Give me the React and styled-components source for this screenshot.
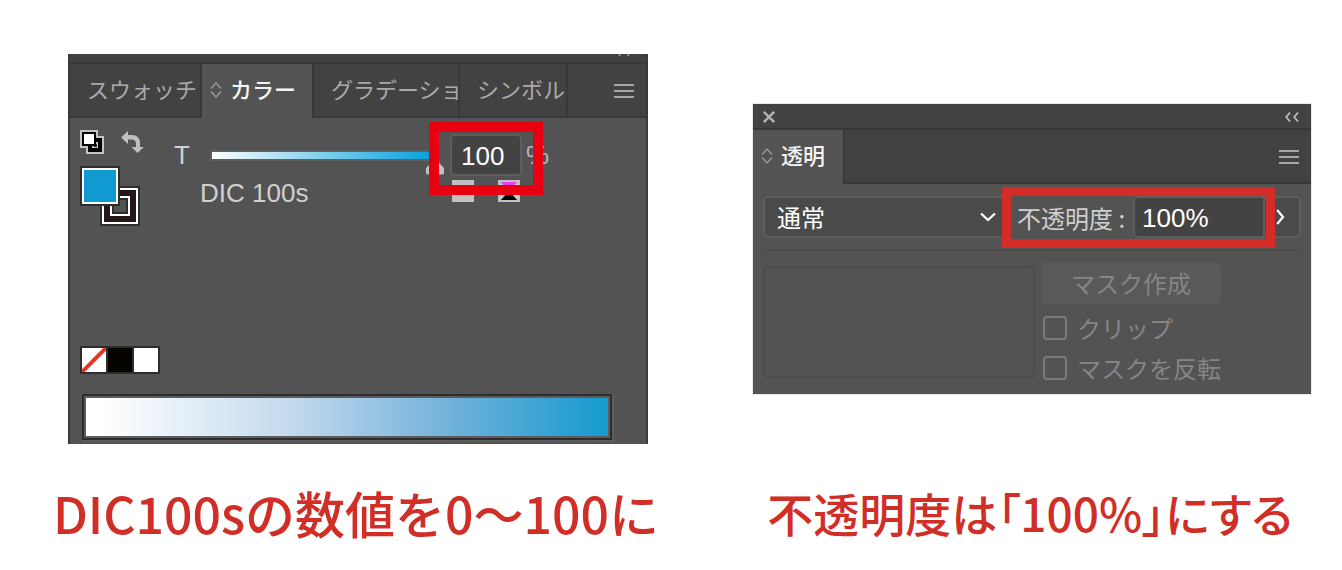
import React, { useState } from 'react';
import styled, { createGlobalStyle } from 'styled-components';

const SortIcon = () => (
  <svg width="12" height="18" viewBox="0 0 12 18" fill="none" stroke="#9a9a9a" strokeWidth="1.3">
    <path d="M1 7.5 6 2l5 5.500M1 10.500 6 16l5-5.500" />
  </svg>
);

const MenuIcon = () => (
  <svg width="20" height="14" viewBox="0 0 20 14" fill="#a8a8a8">
    <path d="M0 0h20v2H0zM0 6h20v2H0zM0 12h20v2H0z" />
  </svg>
);

const CloseIcon = () => (
  <svg width="12" height="12" viewBox="0 0 12 12" fill="none" stroke="#b4b4b4" strokeWidth="2.400">
    <path d="M.8.8l10.400 10.400M11.200.8.8 11.200" />
  </svg>
);

const CollapseIcon = () => (
  <svg width="14" height="10" viewBox="0 0 14 10" fill="none" stroke="#c4c4c4" strokeWidth="1.600">
    <path d="M5 .6 1.200 5 5 9.400M13 .6 9.200 5l3.800 4.400" />
  </svg>
);

const CollapseTipIcon = () => (
  <svg width="12" height="2" viewBox="0 0 12 2" fill="none" stroke="#a0a0a0" strokeWidth="1.400">
    <path d="M2.500 0 1 2M11 0 9.500 2" />
  </svg>
);

const ChevronDownIcon = () => (
  <svg width="16" height="10" viewBox="0 0 16 10" fill="none" stroke="#fff" strokeWidth="2.200">
    <path d="M1 1.500 8 8l7-6.500" />
  </svg>
);

const ChevronRightIcon = () => (
  <svg width="9" height="16" viewBox="0 0 9 16" fill="none" stroke="#fff" strokeWidth="2.200">
    <path d="M1.200 1 7 8l-5.800 7" />
  </svg>
);

const DefaultColorsIcon = () => (
  <svg width="24" height="24" viewBox="0 0 24 24">
    <path d="M0 0h18v6h6v18H6v-6H0z" fill="#c3c3c3" />
    <path d="M8 8h14v14H8z" fill="#000" />
    <path d="M12 12h6v6h-6z" fill="#c3c3c3" />
    <path d="M14 14h3v3h-3z" fill="#333" />
    <path d="M2 2h14v14H2z" fill="#000" />
    <path d="M4 4h10v10H4z" fill="#fff" />
  </svg>
);

const SwapIcon = () => (
  <svg width="24" height="22" viewBox="0 0 24 22" fill="#bfbfbf">
    <path d="M0 6.500 7 0v4h3.500c5.500 0 8.500 3 8.500 8v4h4l-6.500 6-6-6h4.500v-3c0-3-1.500-4.500-4.500-4.500H7V13z" />
  </svg>
);

const FillStrokeIcon = () => (
  <svg width="60" height="60" viewBox="0 0 60 60">
    <path d="M20 20h40v40H20z" fill="#2d2d2d" />
    <path d="M22 22h36v36H22z" fill="#fff" />
    <path d="M24 24h32v32H24z" fill="#231815" />
    <path d="M30 30h20v20H30z" fill="#fff" />
    <path d="M32 32h16v16H32z" fill="#2d2d2d" />
    <path d="M34 34h12v12H34z" fill="#535353" />
    <path d="M0 0h40v40H0z" fill="#2d2d2d" />
    <path d="M2 2h36v36H2z" fill="#fff" />
    <path d="M4 4h32v32H4z" fill="#1199d2" />
  </svg>
);

const ProcessIcon = () => (
  <svg width="22" height="22" viewBox="0 0 22 22">
    <path d="M0 0h22v22H0z" fill="#c1c1c1" />
    <path d="M3 2h16l-8 9z" fill="#e83df0" />
    <path d="M3 20h16l-8-9z" fill="#000" />
    <path d="M2 3l8 8-8 8z" fill="#9fdbe0" />
    <path d="M20 3l-8 8 8 8z" fill="#eadb8a" />
  </svg>
);

const App = () => {
  const [tint, setTint] = useState('100');
  const [opacity, setOpacity] = useState('100%');

  return (
    <>
      <GlobalStyle />
      <Page>
        <ColorPanel>
          <TopStrip>
            <CollapseTipIcon />
          </TopStrip>
          <TabBar>
            <Tab $width={130}>スウォッチ</Tab>
            <Tab $width={110} $active>
              <SortIcon />
              カラー
            </Tab>
            <Tab $width={144}>グラデーショ</Tab>
            <Tab $width={106}>シンボル</Tab>
            <TabRest>
              <IconButton aria-label="パネルメニュー">
                <MenuIcon />
              </IconButton>
            </TabRest>
          </TabBar>
          <ColorBody>
            <ColorTop>
              <ChipColumn>
                <ChipTools>
                  <IconButton aria-label="初期設定の塗りと線">
                    <DefaultColorsIcon />
                  </IconButton>
                  <IconButton aria-label="塗りと線を入れ替え">
                    <SwapIcon />
                  </IconButton>
                </ChipTools>
                <FillStrokeIcon />
              </ChipColumn>
              <ColorMain>
                <TintRow>
                  <TintLabel htmlFor="tint">T</TintLabel>
                  <TintSlider
                    type="range"
                    min="0"
                    max="100"
                    aria-label="T"
                    value={Number(tint) || 0}
                    onChange={(e) => setTint(e.target.value)}
                  />
                  <TintField>
                    <NumberInput id="tint" value={tint} onChange={(e) => setTint(e.target.value)} />
                    <TintHighlight />
                  </TintField>
                  <Unit>%</Unit>
                </TintRow>
                <NameRow>
                  <ColorName>DIC 100s</ColorName>
                  <ModeIcons>
                    <SpotSquare />
                    <ProcessIcon />
                  </ModeIcons>
                </NameRow>
              </ColorMain>
            </ColorTop>
            <QuickColors>
              <QuickColor $color="#fff" aria-label="なし">
                <svg width="24" height="24" viewBox="0 0 24 24">
                  <path d="M0 24 24 0" stroke="#ee3124" strokeWidth="4" />
                </svg>
              </QuickColor>
              <QuickColor $color="#050300" aria-label="ブラック" />
              <QuickColor $color="#fff" aria-label="ホワイト" />
            </QuickColors>
            <Ramp>
              <RampFill />
            </Ramp>
          </ColorBody>
        </ColorPanel>

        <OpacityPanel>
          <TitleBar>
            <IconButton aria-label="閉じる">
              <CloseIcon />
            </IconButton>
            <IconButton aria-label="折りたたむ">
              <CollapseIcon />
            </IconButton>
          </TitleBar>
          <TabBar>
            <Tab $width={90} $active>
              <SortIcon />
              透明
            </Tab>
            <TabRest>
              <IconButton aria-label="パネルメニュー">
                <MenuIcon />
              </IconButton>
            </TabRest>
          </TabBar>
          <OpacityBody>
            <BlendRow>
              <SelectWrap>
                <BlendSelect aria-label="描画モード" defaultValue="normal">
                  <option value="normal">通常</option>
                  <option value="multiply">乗算</option>
                </BlendSelect>
                <ChevronDownIcon />
              </SelectWrap>
              <OpacityGroup>
                <label htmlFor="opacity">不透明度 :</label>
                <OpacityInput id="opacity" value={opacity} onChange={(e) => setOpacity(e.target.value)} />
                <OpacityHighlight />
              </OpacityGroup>
              <StepButton aria-label="不透明度スライダー">
                <ChevronRightIcon />
              </StepButton>
            </BlendRow>
            <Rule />
            <MaskArea>
              <Preview />
              <MaskOptions>
                <MaskButton disabled>マスク作成</MaskButton>
                <CheckLabel>
                  <Checkbox type="checkbox" disabled />
                  クリップ
                </CheckLabel>
                <CheckLabel>
                  <Checkbox type="checkbox" disabled />
                  マスクを反転
                </CheckLabel>
              </MaskOptions>
            </MaskArea>
          </OpacityBody>
        </OpacityPanel>

        <Caption $size={50}>DIC100sの数値を0～100に</Caption>
        <Caption $size={46} $tight>不透明度は「100%」にする</Caption>
      </Page>
    </>
  );
};

const GlobalStyle = createGlobalStyle`
  * {
    box-sizing: border-box;
  }

  body {
    margin: 0;
    background: #fff;
    font-family: "Liberation Sans", "Noto Sans CJK JP", sans-serif;
  }

  button, input, select {
    margin: 0;
    font-family: inherit;
  }

  svg {
    display: block;
    flex: none;
  }
`;

const Page = styled.main`
  display: grid;
  grid-template-columns: minmax(0, 580fr) minmax(0, 558fr);
  column-gap: 105px;
  row-gap: 38px;
  align-items: center;
  padding: 54px 31px 24px 68px;
`;

const Panel = styled.section`
  background: #535353;
  color: #d0d0d0;
`;

const ColorPanel = styled(Panel)`
  border: solid #3a3a3a;
  border-width: 0 2px;
`;

const OpacityPanel = styled(Panel)`
  box-shadow: 0 0 1px #777;
`;

const TopStrip = styled.div`
  display: flex;
  justify-content: flex-end;
  height: 10px;
  padding-right: 16px;
  background: #424242;
  border-bottom: 2px solid #383838;
`;

const TitleBar = styled.div`
  display: flex;
  align-items: center;
  justify-content: space-between;
  height: 26px;
  padding: 2px 12px 0 10px;
  background: #424242;
  border-bottom: 2px solid #383838;
`;

const TabBar = styled.div`
  display: flex;
  height: 54px;
  background: #424242;
`;

const Tab = styled.button`
  display: flex;
  align-items: center;
  gap: 8px;
  flex: none;
  width: ${({ $width }) => $width + 2}px;
  padding: 0 0 ${({ $active }) => ($active ? 6 : 4)}px ${({ $active }) => ($active ? 8 : 17)}px;
  overflow: hidden;
  white-space: nowrap;
  border: 0;
  border-right: 2px solid #383838;
  border-bottom: ${({ $active }) => ($active ? '0' : '2px solid #383838')};
  background: ${({ $active }) => ($active ? '#535353' : '#424242')};
  color: ${({ $active }) => ($active ? '#f4f4f4' : '#a9a9a9')};
  font-size: 22px;
  font-weight: ${({ $active }) => ($active ? 500 : 400)};
  font-family: "Noto Sans CJK JP", sans-serif;

  > svg {
    margin-top: 4px;
  }
`;

const TabRest = styled.div`
  display: flex;
  flex: 1;
  align-items: center;
  justify-content: flex-end;
  padding: 2px 12px 0 0;
  border-bottom: 2px solid #383838;
`;

const IconButton = styled.button`
  padding: 0;
  border: 0;
  background: none;
  cursor: pointer;
`;

const ColorBody = styled.div`
  padding: 12px 34px 4px 10px;
`;

const ColorTop = styled.div`
  display: flex;
  gap: 34px;
`;

const ChipColumn = styled.div`
  display: flex;
  flex-direction: column;
  gap: 12px;
  width: 60px;
`;

const ChipTools = styled.div`
  display: flex;
  align-items: center;
  gap: 17px;
  height: 24px;
`;

const ColorMain = styled.div`
  display: flex;
  flex: 1;
  flex-direction: column;
  gap: 4px;
  min-width: 0;
  padding: 4px 62px 0 0;
`;

const TintRow = styled.div`
  display: flex;
  align-items: center;
  height: 42px;
  font-size: 26px;
`;

const TintLabel = styled.label`
  width: 16px;
`;

const TintSlider = styled.input`
  appearance: none;
  flex: 1;
  min-width: 0;
  height: 42px;
  margin: 0 6px 0 20px;
  background: none;

  &::-webkit-slider-runnable-track {
    height: 11px;
    background:
      linear-gradient(90deg, #fff, #009fdb) 2px 2px / calc(100% - 10px) 7px no-repeat,
      linear-gradient(#5f5f5f, #5f5f5f) 0 0 / calc(100% - 8px) 100% no-repeat;
  }

  &::-webkit-slider-thumb {
    appearance: none;
    width: 18px;
    height: 13px;
    margin-top: 12px;
    background: #c1c1c1;
    clip-path: polygon(0 50%, 35% 0, 65% 0, 100% 50%, 100% 92%, 92% 100%, 8% 100%, 0 92%);
  }
`;

const TintField = styled.div`
  position: relative;
  width: 72px;
`;

const NumberInput = styled.input`
  display: block;
  width: 100%;
  height: 42px;
  padding: 2px 0 0 9px;
  border: 2px solid #5e5e5e;
  border-radius: 5px;
  background: #434343;
  color: #fff;
  font-size: 26px;
`;

const Highlight = styled.div`
  position: absolute;
  z-index: 1;
  pointer-events: none;
`;

const TintHighlight = styled(Highlight)`
  inset: -12px -21px -19px;
  border: 10px solid #e60012;
`;

const Unit = styled.span`
  width: 24px;
  margin-left: 4px;
  color: #b9b9b9;
`;

const NameRow = styled.div`
  display: flex;
  align-items: center;
  justify-content: space-between;
  height: 22px;
  padding: 0 30px 0 26px;
  white-space: nowrap;
`;

const ColorName = styled.span`
  padding-top: 4px;
  font-size: 26px;
`;

const ModeIcons = styled.div`
  display: flex;
  gap: 24px;
`;

const SpotSquare = styled.div`
  width: 22px;
  height: 22px;
  background: #c1c1c1;
`;

const QuickColors = styled.div`
  display: flex;
  gap: 2px;
  width: 80px;
  margin-top: 120px;
  padding: 2px;
  background: #2d2d2d;
`;

const QuickColor = styled.button`
  flex: 1;
  height: 24px;
  padding: 0;
  border: 0;
  background: ${({ $color }) => $color};
`;

const Ramp = styled.div`
  margin: 20px 0 0 2px;
  padding: 2px;
  border: 2px solid #2d2d2d;
  background: #5c5c5c;
  box-shadow: 1px 1px 0 1px #5c5c5c;
`;

const RampFill = styled.div`
  height: 38px;
  background: linear-gradient(90deg, #fff 3%, #c5dbee 38%, #6bafda 72%, #149acf);
`;

const OpacityBody = styled.div`
  padding: 12px 10px 14px;
`;

const BlendRow = styled.div`
  display: flex;
  align-items: center;
  height: 42px;
  font-size: 24px;
  font-family: "Noto Sans CJK JP", sans-serif;
`;

const SelectWrap = styled.div`
  display: grid;
  flex: 1;
  align-items: center;
  min-width: 0;
  margin-right: 10px;

  > * {
    grid-area: 1 / 1;
  }

  > svg {
    justify-self: end;
    margin-right: 11px;
    pointer-events: none;
  }
`;

const BlendSelect = styled.select`
  appearance: none;
  width: 100%;
  height: 42px;
  padding: 0 12px 2px;
  border: 2px solid #5e5e5e;
  border-radius: 5px;
  background: #4a4a4a;
  color: #fff;
  font-size: 24px;
`;

const OpacityGroup = styled.div`
  position: relative;
  display: flex;
  align-items: center;
  justify-content: space-between;
  width: 248px;
  white-space: nowrap;
`;

const OpacityInput = styled.input`
  width: 132px;
  height: 42px;
  padding: 2px 0 0 7px;
  border: 2px solid #5e5e5e;
  border-radius: 5px 0 0 5px;
  background: #434343;
  color: #fff;
  font-size: 26px;

  && {
    font-family: "Liberation Sans", sans-serif;
  }
`;

const OpacityHighlight = styled(Highlight)`
  inset: -9px -10px -10px -15px;
  border: 9px solid #d42d27;
`;

const StepButton = styled.button`
  display: flex;
  align-items: center;
  width: 36px;
  height: 42px;
  padding: 0 0 0 11px;
  border: 2px solid #5e5e5e;
  border-left: 0;
  border-radius: 0 5px 5px 0;
  background: #4a4a4a;
`;

const Rule = styled.div`
  height: 2px;
  margin: 11px 0;
  background: #4d4d4d;
`;

const MaskArea = styled.div`
  display: grid;
  grid-template-columns: minmax(0, 1fr) 260px;
  gap: 6px;
`;

const Preview = styled.div`
  height: 112px;
  margin-top: 4px;
  border: 2px solid #4b4b4b;
  border-radius: 5px;
`;

const MaskOptions = styled.div`
  display: flex;
  flex-direction: column;
  align-items: flex-start;
  color: #858585;
  font-size: 24px;
  font-family: "Noto Sans CJK JP", sans-serif;
`;

const MaskButton = styled.button`
  width: 180px;
  height: 42px;
  margin-bottom: 12px;
  padding: 0 0 2px;
  border: 0;
  border-radius: 4px;
  background: #575a59;
  color: #858585;
  font-size: 24px;
`;

const CheckLabel = styled.label`
  display: flex;
  align-items: center;
  gap: 10px;
  height: 24px;
  margin-left: 2px;
  line-height: 24px;

  & + & {
    margin-top: 16px;
  }
`;

const Checkbox = styled.input`
  appearance: none;
  width: 24px;
  height: 24px;
  border: 2px solid #7a7a7a;
  border-radius: 4px;
`;

const Caption = styled.p`
  justify-self: center;
  margin: 0;
  padding-right: 4px;
  color: #d02e26;
  font-family: "Noto Sans CJK JP", sans-serif;
  font-size: ${({ $size }) => $size}px;
  font-weight: 500;
  font-feature-settings: ${({ $tight }) => ($tight ? '"palt"' : 'normal')};
  line-height: 60px;
  white-space: nowrap;
`;

export default App;
